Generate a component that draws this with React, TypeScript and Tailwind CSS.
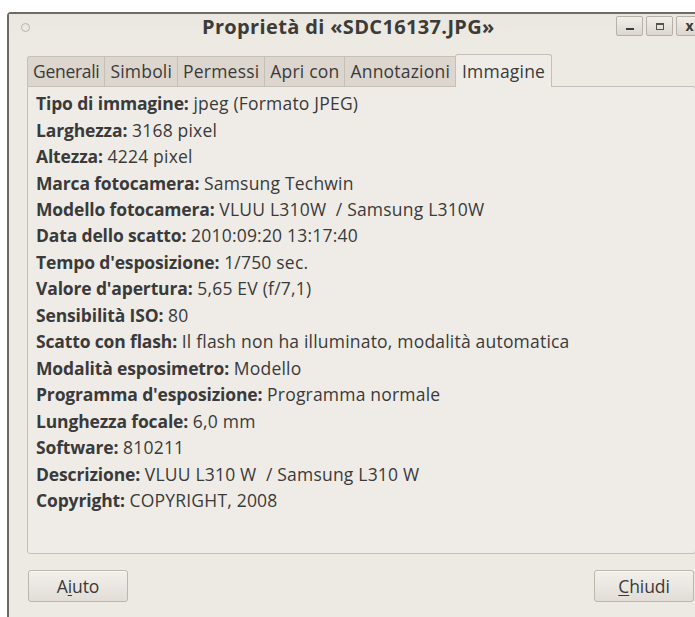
import React from "react";

const rows: [string, string][] = [
  ["Tipo di immagine:", "jpeg (Formato JPEG)"],
  ["Larghezza:", "3168 pixel"],
  ["Altezza:", "4224 pixel"],
  ["Marca fotocamera:", "Samsung Techwin"],
  ["Modello fotocamera:", "VLUU L310W  / Samsung L310W"],
  ["Data dello scatto:", "2010:09:20 13:17:40"],
  ["Tempo d'esposizione:", "1/750 sec."],
  ["Valore d'apertura:", "5,65 EV (f/7,1)"],
  ["Sensibilità ISO:", "80"],
  ["Scatto con flash:", "Il flash non ha illuminato, modalità automatica"],
  ["Modalità esposimetro:", "Modello"],
  ["Programma d'esposizione:", "Programma normale"],
  ["Lunghezza focale:", "6,0 mm"],
  ["Software:", "810211"],
  ["Descrizione:", "VLUU L310 W  / Samsung L310 W"],
  ["Copyright:", "COPYRIGHT, 2008"],
];

const tabs = ["Generali", "Simboli", "Permessi", "Apri con", "Annotazioni"];

function WinButton({ children }: { children: React.ReactNode }) {
  return (
    <div className="w-[27px] h-[20px] flex items-center justify-center border border-[#b8b1a7] rounded-[2px] bg-gradient-to-b from-[#f2efea] to-[#dcd6ce]">
      {children}
    </div>
  );
}

function DialogButton({ children }: { children: React.ReactNode }) {
  return (
    <button className="w-[100px] h-[32px] flex items-center justify-center border border-[#bdb6ac] rounded-[3px] bg-gradient-to-b from-[#f3f0ec] to-[#e2ddd6] text-[17.5px] text-[#3a3a3a] tracking-[-0.1px] shadow-[inset_0_1px_0_#fbfaf8]">
      {children}
    </button>
  );
}

export default function App() {
  return (
    <div
      className="w-[695px] h-[617px] bg-white overflow-hidden"
      style={{ fontFamily: '"Open Sans", "Noto Sans", sans-serif' }}
    >
      <div className="ml-[7px] mt-[12px] w-[700px] h-[610px] bg-[#ede9e3] border-l-2 border-t-2 border-[#6e6962] rounded-tl-[4px] flex flex-col">
        {/* title bar */}
        <div className="h-[26px] flex items-center bg-gradient-to-b from-[#eae6e0] to-[#ede9e3]">
          <div className="ml-[12px] w-[9px] h-[9px] rounded-full border border-[#b9b3aa]" />
          <div className="ml-[172px] text-[20px] font-bold text-[#3c3b37] tracking-[0.35px] leading-none">
            Proprietà di «SDC16137.JPG»
          </div>
          <div className="ml-auto flex gap-[3px] mr-[4px] mb-[2px]">
            <WinButton>
              <div className="w-[8px] h-[2px] bg-[#3c3b37] mt-[6px]" />
            </WinButton>
            <WinButton>
              <div className="w-[8px] h-[7px] border border-[#55514b] border-t-2" />
            </WinButton>
            <WinButton>
              <span className="text-[14px] font-bold text-[#3c3b37] leading-none">x</span>
            </WinButton>
          </div>
        </div>

        {/* notebook */}
        <div className="ml-[18px] mr-[11px] mt-[14px] flex flex-col">
          <div className="flex items-end h-[32px]">
            {tabs.map((t) => (
              <div
                key={t}
                className="h-[30px] flex items-center px-[5px] border border-b-0 border-[#c6bfb5] -mr-px bg-[#dcd6ce] text-[17.5px] text-[#3a3a3a] tracking-[0.2px] first:rounded-tl-[3px] first:tracking-[-0.3px]"
              >
                {t}
              </div>
            ))}
            <div className="h-[33px] flex items-center px-[6px] border border-b-0 border-[#c6bfb5] rounded-t-[3px] bg-[#efece7] text-[17.5px] text-[#3a3a3a] tracking-[0.2px] relative z-10 -mb-px">
              Immagine
            </div>
          </div>
          <div className="h-[468px] border border-[#c6bfb5] rounded-b-[3px] rounded-tr-[3px] bg-[#efece7] pl-[8px] pt-[3px]">
            {rows.map(([k, v]) => (
              <div key={k} className="h-[26.47px] flex items-center text-[17.5px] text-[#3a3a3a] whitespace-pre">
                <span className="font-bold tracking-[-0.15px]">{k}</span>
                <span className="tracking-[0.2px]"> {v}</span>
              </div>
            ))}
          </div>
        </div>

        {/* action buttons */}
        <div className="ml-[19px] mr-[13px] mt-[16px] flex justify-between">
          <DialogButton>
            A<span className="underline underline-offset-2">i</span>uto
          </DialogButton>
          <DialogButton>
            <span className="underline underline-offset-2">C</span>hiudi
          </DialogButton>
        </div>
      </div>
    </div>
  );
}
